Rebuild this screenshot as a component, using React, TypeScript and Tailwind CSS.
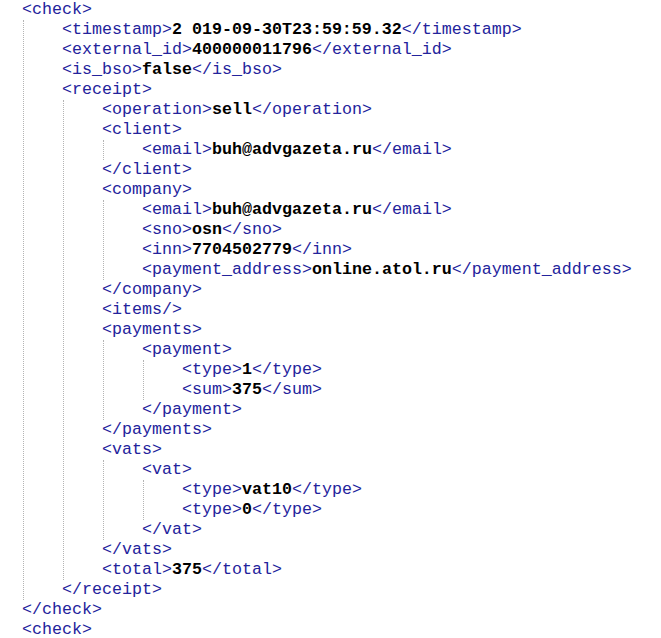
type XmlNode = {
  tag: string;
  value?: string;
  children?: XmlNode[];
  empty?: boolean;
};

const check: XmlNode = {
  tag: "check",
  children: [
    { tag: "timestamp", value: "2 019-09-30T23:59:59.32" },
    { tag: "external_id", value: "400000011796" },
    { tag: "is_bso", value: "false" },
    {
      tag: "receipt",
      children: [
        { tag: "operation", value: "sell" },
        { tag: "client", children: [{ tag: "email", value: "buh@advgazeta.ru" }] },
        {
          tag: "company",
          children: [
            { tag: "email", value: "buh@advgazeta.ru" },
            { tag: "sno", value: "osn" },
            { tag: "inn", value: "7704502779" },
            { tag: "payment_address", value: "online.atol.ru" },
          ],
        },
        { tag: "items", empty: true },
        {
          tag: "payments",
          children: [
            {
              tag: "payment",
              children: [
                { tag: "type", value: "1" },
                { tag: "sum", value: "375" },
              ],
            },
          ],
        },
        {
          tag: "vats",
          children: [
            {
              tag: "vat",
              children: [
                { tag: "type", value: "vat10" },
                { tag: "type", value: "0" },
              ],
            },
          ],
        },
        { tag: "total", value: "375" },
      ],
    },
  ],
};

const Tag = ({ children }: { children: React.ReactNode }) => (
  <span className="text-[#23239c]">{children}</span>
);

const Node = ({ node }: { node: XmlNode }) => {
  if (node.empty) {
    return (
      <div className="whitespace-pre">
        <Tag>{`<${node.tag}/>`}</Tag>
      </div>
    );
  }

  if (node.children) {
    return (
      <div>
        <div className="whitespace-pre">
          <Tag>{`<${node.tag}>`}</Tag>
        </div>
        <div className="ml-[1px] border-l border-dotted border-[#b4b4b4] pl-[38px]">
          {node.children.map((child, i) => (
            <Node key={i} node={child} />
          ))}
        </div>
        <div className="whitespace-pre">
          <Tag>{`</${node.tag}>`}</Tag>
        </div>
      </div>
    );
  }

  return (
    <div className="whitespace-pre">
      <Tag>{`<${node.tag}>`}</Tag>
      <span className="font-bold text-black">{node.value}</span>
      <Tag>{`</${node.tag}>`}</Tag>
    </div>
  );
};

export default function App() {
  return (
    <div className="w-[661px] h-[638px] overflow-hidden bg-white pl-[22px] font-['Liberation_Mono','Courier_New',monospace] text-[16.67px] leading-[20px]">
      <Node node={check} />
      <div className="whitespace-pre">
        <Tag>{"<check>"}</Tag>
      </div>
    </div>
  );
}
